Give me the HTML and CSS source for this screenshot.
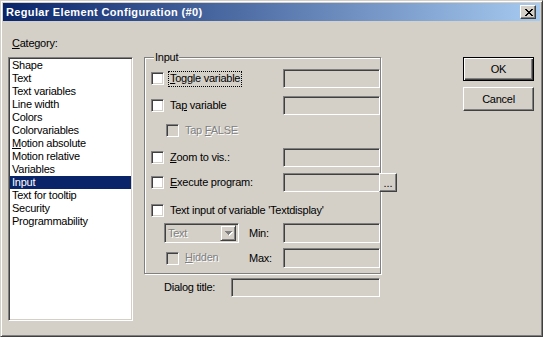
FILE: index.html
```html
<!DOCTYPE html>
<html lang="en">
  <head>
    <meta charset="UTF-8" />
    <title>Regular Element Configuration (#0)</title>
    <link rel="stylesheet" href="styles.css">
  </head>
  <body>
    <div class="window">
      <div class="titlebar">
        <span class="title">Regular Element Configuration (#0)</span>
        <button class="close-btn" aria-label="Close">
          <svg width="8" height="7" viewBox="0 0 8 7" shape-rendering="crispEdges">
            <path fill="#000" d="M0 0h2v1h-2z M6 0h2v1h-2z M1 1h2v1h-2z M5 1h2v1h-2z M2 2h4v1h-4z M3 3h2v1h-2z M2 4h4v1h-4z M1 5h2v1h-2z M5 5h2v1h-2z M0 6h2v1h-2z M6 6h2v1h-2z" />
          </svg>
        </button>
      </div>

      <div class="dialog">
        <!-- Category list -->
        <div class="col-category">
          <div class="cat-label"><u>C</u>ategory:</div>
          <ul class="listbox">
            <li>Shape</li>
            <li>Text</li>
            <li>Text variables</li>
            <li>Line width</li>
            <li>Colors</li>
            <li>Colorvariables</li>
            <li><u>M</u>otion absolute</li>
            <li>Motion relative</li>
            <li>Variables</li>
            <li class="selected">Input</li>
            <li>Text for tooltip</li>
            <li>Security</li>
            <li>Programmability</li>
          </ul>
        </div>

        <!-- Input settings -->
        <div class="col-main">
          <div class="groupbox">
            <span class="legend">Input</span>

            <div class="row">
              <span class="check"></span>
              <span class="check-label focus"><u>T</u>oggle variable</span>
              <span class="field"></span>
            </div>

            <div class="row">
              <span class="check"></span>
              <span class="check-label">Ta<u>p</u> variable</span>
              <span class="field"></span>
            </div>

            <div class="row">
              <span class="check disabled indent"></span>
              <span class="check-label disabled-text">Tap <u>F</u>ALSE</span>
            </div>

            <div class="row">
              <span class="check"></span>
              <span class="check-label"><u>Z</u>oom to vis.:</span>
              <span class="field"></span>
            </div>

            <div class="row">
              <span class="check"></span>
              <span class="check-label"><u>E</u>xecute program:</span>
              <span class="field"></span>
              <span class="browse-btn">...</span>
            </div>

            <div class="row">
              <span class="check"></span>
              <span class="check-label">Text input of variable 'Textdisplay'</span>
            </div>

            <div class="row tall">
              <div class="cell-left">
                <div class="combo">
                  <span class="combo-text disabled-text">Text</span>
                  <span class="combo-btn">
                    <svg width="8" height="5" viewBox="0 0 8 5" shape-rendering="crispEdges">
                      <path fill="#fff" d="M1 1h7v1h-7z M2 2h5v1h-5z M3 3h3v1h-3z M4 4h1v1h-1z" />
                      <path fill="#808080" d="M0 0h7v1h-7z M1 1h5v1h-5z M2 2h3v1h-3z M3 3h1v1h-1z" />
                    </svg>
                  </span>
                </div>
              </div>
              <span class="side-label">Min:</span>
              <span class="field tall"></span>
            </div>

            <div class="row tall">
              <div class="cell-left">
                <span class="check disabled indent"></span>
                <span class="check-label disabled-text"><u>H</u>idden</span>
              </div>
              <span class="side-label">Max:</span>
              <span class="field tall"></span>
            </div>
          </div>

          <div class="title-row">
            <span>Dialog title:</span>
            <span class="field wide"></span>
          </div>
        </div>

        <!-- Dialog buttons -->
        <div class="col-buttons">
          <button class="btn default">OK</button>
          <button class="btn">Cancel</button>
        </div>
      </div>
    </div>
  </body>
</html>
```

FILE: styles.css
```css
/* Reset */
* {
  margin: 0;
  padding: 0;
  box-sizing: border-box;
}

body {
  font-family: "Liberation Sans", Arial, sans-serif;
  font-size: 11px;
  line-height: 13px;
  letter-spacing: -0.25px;
  color: #000;
  background-color: #d4d0c8;
}

/* Window frame */
.window {
  width: 543px;
  height: 337px;
  background-color: #d4d0c8;
  border: 1px solid;
  border-color: #d4d0c8 #404040 #404040 #d4d0c8;
  box-shadow: inset 1px 1px 0 #fff, inset -1px -1px 0 #808080;
  padding: 2px;
}

/* Title bar */
.titlebar {
  height: 18px;
  display: flex;
  align-items: center;
  padding-left: 3px;
  background: linear-gradient(to right, #0a246a, #a6caf0);
  color: #fff;
}

.title {
  font-weight: bold;
  letter-spacing: 0.35px;
}

.close-btn {
  margin-left: auto;
  margin-right: 4px;
  width: 16px;
  height: 14px;
  display: flex;
  align-items: center;
  justify-content: center;
  background-color: #d4d0c8;
  border: 1px solid;
  border-color: #fff #404040 #404040 #fff;
  box-shadow: inset -1px -1px 0 #808080;
}

.close-btn svg {
  display: block;
  margin-left: 1px;
}

/* Dialog body */
.dialog {
  display: flex;
  padding: 16px 0 0 5px;
}

.col-category {
  width: 125px;
  flex: none;
}

.cat-label {
  height: 13px;
  margin-bottom: 7px;
  padding-left: 4px;
}

.listbox {
  list-style: none;
  height: 264px;
  padding: 1px 0 0;
  background-color: #fff;
  border: 1px solid;
  border-color: #808080 #fff #fff #808080;
  box-shadow: inset 1px 1px 0 #404040, inset -1px -1px 0 #d4d0c8;
}

.listbox li {
  height: 13px;
  margin: 0 1px;
  padding-left: 2px;
  white-space: nowrap;
}

.listbox li.selected {
  background-color: #0a246a;
  color: #fff;
}

/* Group box */
.col-main {
  width: 237px;
  margin-left: 11px;
  padding-top: 20px;
  flex: none;
}

.groupbox {
  position: relative;
  height: 217px;
  border: 1px solid #808080;
  box-shadow: inset 1px 1px 0 #fff, 1px 1px 0 #fff;
  padding: 11px 0 5px 6px;
  display: grid;
  grid-template-rows: 27px 25px 27px 25px 28px 22px 25px 20px;
}

.legend {
  position: absolute;
  top: -7px;
  left: 9px;
  padding: 0 1px;
  background-color: #d4d0c8;
}

.row {
  display: flex;
  align-items: center;
  height: 19px;
}

.row.tall {
  height: 20px;
}

.check {
  width: 13px;
  height: 13px;
  flex: none;
  background-color: #fff;
  border: 1px solid;
  border-color: #808080 #fff #fff #808080;
  box-shadow: inset 1px 1px 0 #404040, inset -1px -1px 0 #d4d0c8;
}

.check.disabled {
  background-color: #d4d0c8;
}

.check.indent {
  margin-left: 15px;
}

.check-label {
  margin-left: 4px;
  padding: 0 1px 1px;
  border: 1px dotted transparent;
  white-space: nowrap;
}

.check-label.focus {
  border-color: #000;
}

.disabled-text {
  color: #808080;
  text-shadow: 1px 1px 0 #fff;
}

/* Edit fields */
.field {
  margin-left: auto;
  width: 97px;
  height: 19px;
  flex: none;
  background-color: #d4d0c8;
  border: 1px solid;
  border-color: #808080 #fff #fff #808080;
  box-shadow: inset 1px 1px 0 #404040, inset -1px -1px 0 #d4d0c8;
}

.field.tall {
  height: 20px;
}

.field.wide {
  width: 149px;
}

.browse-btn {
  width: 18px;
  height: 19px;
  flex: none;
  margin-left: -1px;
  margin-right: -17px;
  padding-top: 3px;
  text-align: center;
  letter-spacing: 0;
  background-color: #d4d0c8;
  border: 1px solid;
  border-color: #fff #404040 #404040 #fff;
  box-shadow: inset -1px -1px 0 #808080;
}

/* Combo + Min/Max */
.cell-left {
  width: 98px;
  flex: none;
  display: flex;
  align-items: center;
}

.combo {
  margin-left: 13px;
  width: 75px;
  height: 20px;
  display: flex;
  align-items: center;
  background-color: #d4d0c8;
  border: 1px solid;
  border-color: #808080 #fff #fff #808080;
  box-shadow: inset 1px 1px 0 #404040, inset -1px -1px 0 #d4d0c8;
  padding: 2px;
}

.combo-text {
  padding-left: 1px;
}

.combo-btn {
  margin-left: auto;
  width: 16px;
  height: 16px;
  display: flex;
  align-items: center;
  justify-content: center;
  border: 1px solid;
  border-color: #d4d0c8 #404040 #404040 #d4d0c8;
  box-shadow: inset 1px 1px 0 #fff, inset -1px -1px 0 #808080;
}

.combo-btn svg {
  display: block;
  margin-left: 1px;
}

.side-label {
  white-space: nowrap;
}

/* Dialog title row */
.title-row {
  display: flex;
  align-items: center;
  height: 19px;
  margin-top: 4px;
  padding: 0 1px 0 20px;
}

/* Buttons */
.col-buttons {
  width: 71px;
  margin-left: 82px;
  padding-top: 20px;
  display: flex;
  flex-direction: column;
  gap: 6px;
  flex: none;
}

.btn {
  height: 24px;
  font-family: inherit;
  font-size: 11px;
  letter-spacing: -0.25px;
  color: #000;
  background-color: #d4d0c8;
  border: 1px solid;
  border-color: #fff #404040 #404040 #fff;
  box-shadow: inset -1px -1px 0 #808080;
}

.btn.default {
  border: 1px solid #000;
  box-shadow: inset 1px 1px 0 #fff, inset -1px -1px 0 #404040, inset -2px -2px 0 #808080;
}
```
